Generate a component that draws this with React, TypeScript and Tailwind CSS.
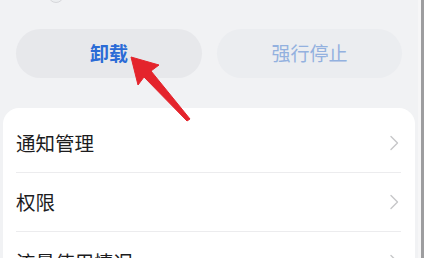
import React from 'react'

const rows = ['通知管理', '权限', '流量使用情况']

const Chevron = () => (
  <svg width="10" height="16" viewBox="0 0 10 16" fill="none">
    <path d="M2 1.5 L8.5 8 L2 14.5" stroke="#c6c7c9" strokeWidth="1.4" strokeLinecap="round" strokeLinejoin="round" />
  </svg>
)

const App = () => {
  return (
    <div
      className="relative flex h-[258px] w-[424px] overflow-hidden bg-[#f1f2f4]"
      style={{ fontFamily: '"Noto Sans CJK SC", "Noto Sans", sans-serif' }}
    >
      <div className="flex w-[418px] flex-col">
        {/* cut-off icon at the top */}
        <div className="h-[4px] shrink-0 overflow-hidden pl-[48px]">
          <div className="-mt-[14px] h-[17px] w-[16px] rounded-full border border-[#d6d7da] bg-[#eceef0]" />
        </div>

        {/* action buttons */}
        <div className="mt-[25px] flex shrink-0 gap-[15px] px-[16px]">
          <button className="flex h-[49px] w-[186px] items-center justify-center rounded-full bg-[#e7e8eb] text-[19px] font-bold text-[#2b6bd6]">
            卸载
          </button>
          <button className="flex h-[49px] w-[185px] items-center justify-center rounded-full bg-[#ebedf0] text-[19px] text-[#93b1df]">
            强行停止
          </button>
        </div>

        {/* settings list */}
        <div className="mx-[3px] mt-[30px] shrink-0 rounded-[16px] bg-white pt-[6px]">
          {rows.map((label, i) => (
            <div key={label} className="ml-[13px] mr-[14px]">
              <div
                className={
                  'flex h-[59px] items-center justify-between ' +
                  (i < rows.length - 1 ? 'border-b border-[#ececee]' : '')
                }
              >
                <span className="text-[19.5px] text-[#1c1c1e]">{label}</span>
                <span className="mr-[2px]">
                  <Chevron />
                </span>
              </div>
            </div>
          ))}
        </div>
      </div>

      {/* right scrollbar edge */}
      <div className="w-[3px] bg-[#f6f6f7]" />
      <div className="w-[3px] bg-[#9d9d9f]" />

      {/* red annotation arrow */}
      <svg className="pointer-events-none absolute left-0 top-0" width="424" height="258" viewBox="0 0 424 258">
        <polygon
          points="131,57 159,65 151,71 190,119 187,121 144,77 138,85"
          fill="#e4242c"
          stroke="#e4242c"
          strokeWidth="1"
          strokeLinejoin="round"
        />
      </svg>
    </div>
  )
}

export default App
